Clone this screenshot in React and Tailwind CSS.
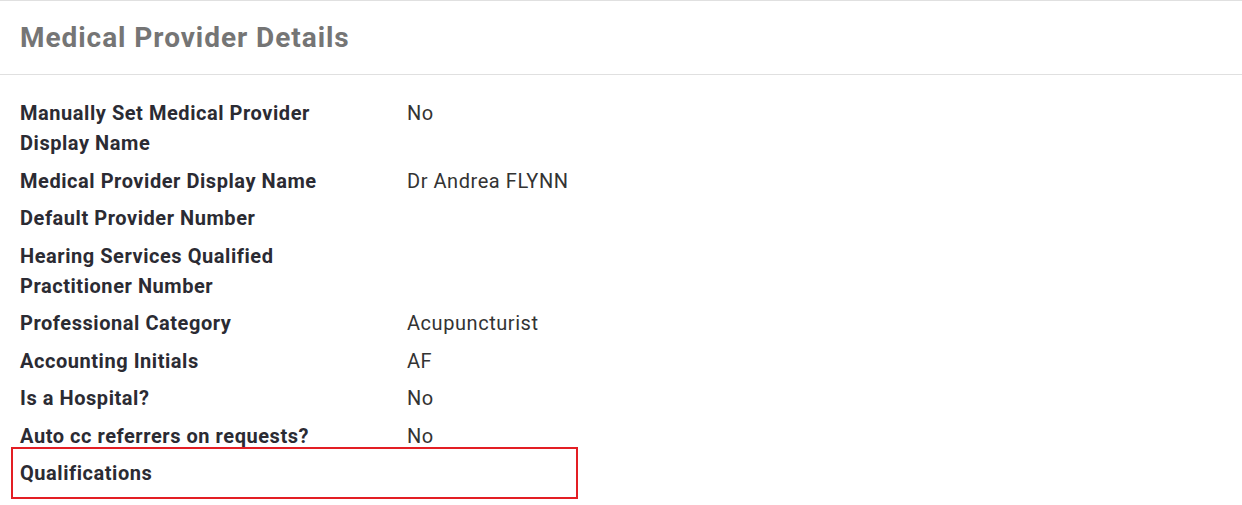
import React from 'react';

const rows = [
  { label: 'Manually Set Medical Provider Display Name', value: 'No' },
  { label: 'Medical Provider Display Name', value: 'Dr Andrea FLYNN' },
  { label: 'Default Provider Number', value: '' },
  { label: 'Hearing Services Qualified Practitioner Number', value: '' },
  { label: 'Professional Category', value: 'Acupuncturist' },
  { label: 'Accounting Initials', value: 'AF' },
  { label: 'Is a Hospital?', value: 'No' },
  { label: 'Auto cc referrers on requests?', value: 'No' },
];

const DetailRow = ({ label, value }) => (
  <div className="flex leading-[30px]">
    <div className="w-[387px] shrink-0 pr-[40px] font-bold text-[#2b2b33]">{label}</div>
    <div className="text-[#333333]">{value}</div>
  </div>
);

export default function App() {
  return (
    <div
      className="w-[1242px] h-[505px] bg-white overflow-hidden text-[20px] tracking-[0.55px]"
      style={{ fontFamily: 'Roboto, "Liberation Sans", sans-serif' }}
    >
      <div className="border-t border-b border-[#e0e0e0] h-[75px] flex items-center px-[20px]">
        <h1 className="text-[28px] font-bold text-[#757575] leading-none mt-[1px] tracking-[0.95px]">
          Medical Provider Details
        </h1>
      </div>
      <div className="px-[20px] pt-[23px] flex flex-col gap-y-[7.5px]">
        {rows.map((r) => (
          <DetailRow key={r.label} label={r.label} value={r.value} />
        ))}
        <div className="-ml-[9px] w-[567px] mt-[-11.5px] border-2 border-[#e31e24] pl-[7px] pt-[9px] pb-[9px]">
          <DetailRow label="Qualifications" value="" />
        </div>
      </div>
    </div>
  );
}
